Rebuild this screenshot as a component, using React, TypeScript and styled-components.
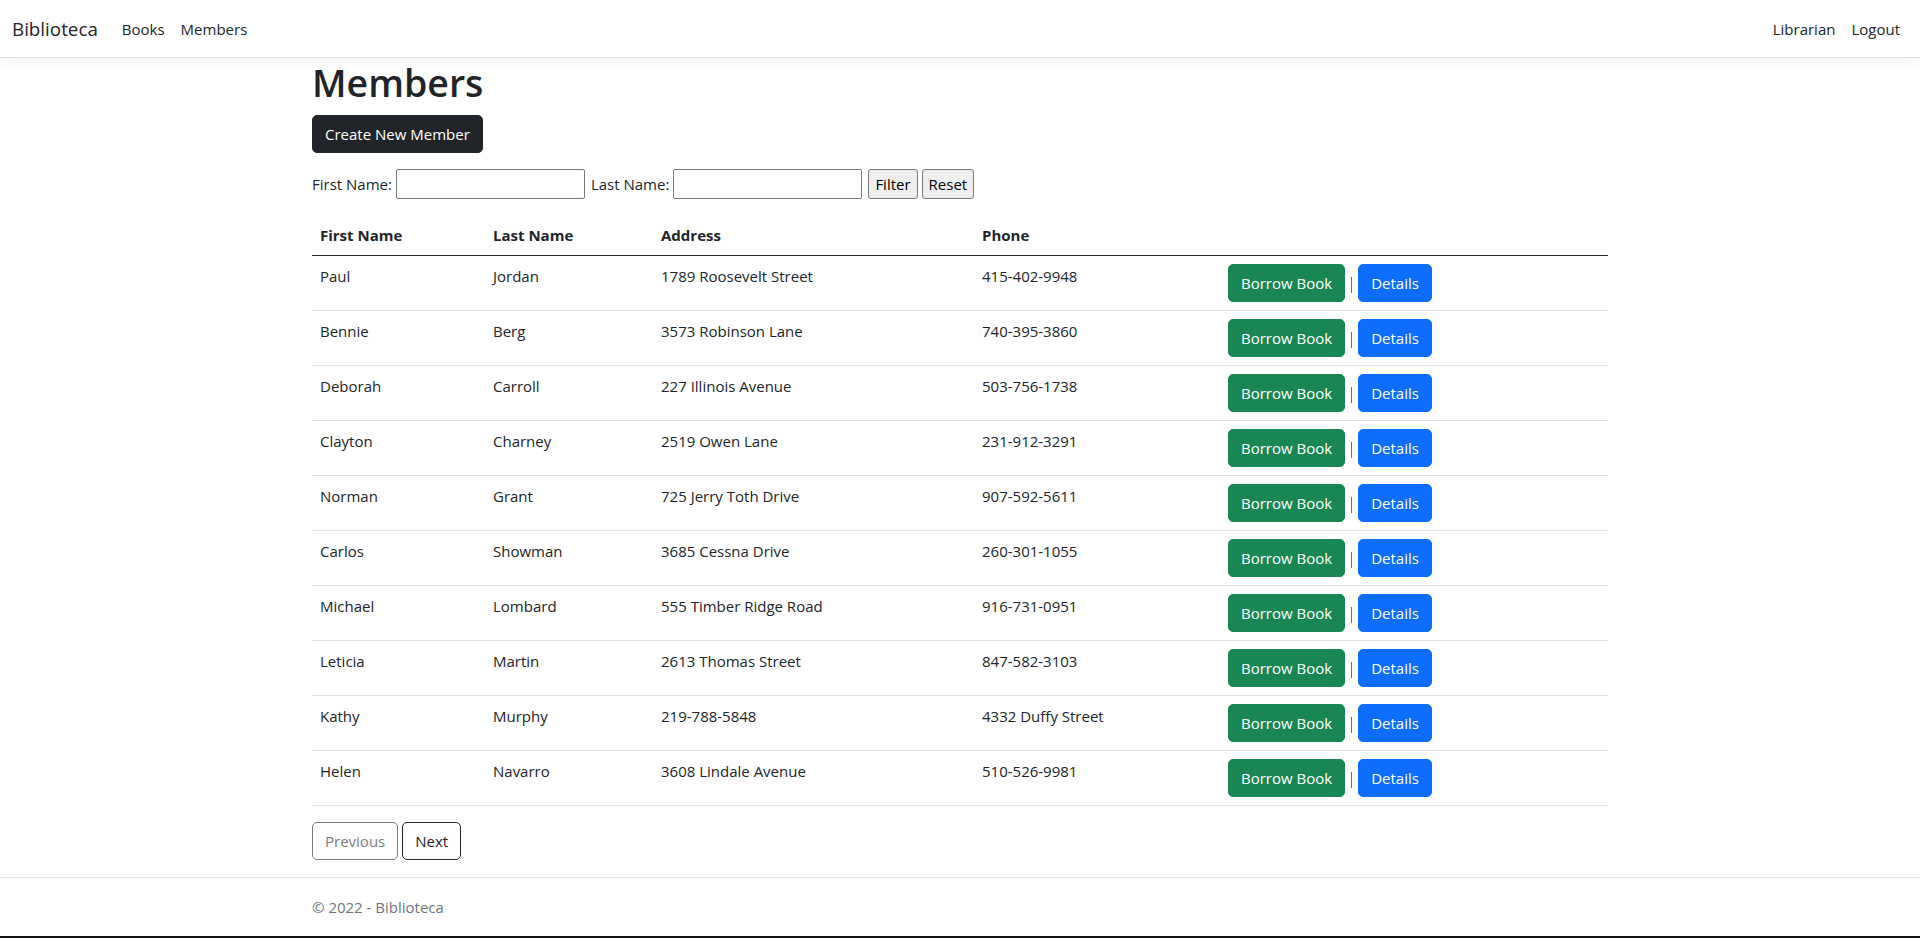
import React from "react";
import styled, { createGlobalStyle, css } from "styled-components";

const GlobalStyle = createGlobalStyle`
  html, body {
    margin: 0;
    padding: 0;
  }
  body {
    font-family: "Open Sans", "Noto Sans", Arial, sans-serif;
    font-size: 15px;
    line-height: 24px;
    color: #212529;
    background: #fff;
  }
  * {
    box-sizing: border-box;
  }
`;

const Page = styled.div`
  display: flex;
  flex-direction: column;
  min-height: 100vh;
`;

const NavBar = styled.header`
  display: flex;
  align-items: center;
  height: 58px;
  padding: 0 12px;
  background: #fff;
  border-bottom: 1px solid #dee2e6;
  box-shadow: 0 4px 12px rgba(0, 0, 0, 0.05);
`;

const Brand = styled.a`
  font-size: 18.8px;
  line-height: 30px;
  padding: 5px 0;
  margin-right: 16px;
  color: #212529;
  text-decoration: none;
`;

const NavList = styled.nav<{ $grow?: boolean }>`
  display: flex;
  flex: ${(p) => (p.$grow ? 1 : "none")};
`;

const NavLink = styled.a`
  padding: 8px;
  color: #212529;
  text-decoration: none;
  font-size: 15px;
  line-height: 24px;
`;

const Container = styled.div`
  width: 100%;
  max-width: 1296px;
  margin: 0 auto;
`;

const Main = styled.main`
  padding-bottom: 16px;
`;

const Title = styled.h1`
  font-size: 37.5px;
  font-weight: 600;
  line-height: 48px;
  margin: 1px 0 8px;
`;

const ButtonRow = styled.p`
  margin: 0 0 16px;
`;

type Variant = "dark" | "success" | "primary" | "outline";

const variants = {
  dark: css`
    background: #212529;
    border-color: #212529;
    color: #fff;
  `,
  success: css`
    background: #198754;
    border-color: #198754;
    color: #fff;
  `,
  primary: css`
    background: #0d6efd;
    border-color: #0d6efd;
    color: #fff;
  `,
  outline: css`
    background: #fff;
    border-color: #212529;
    color: #212529;
  `,
};

const Btn = styled.button<{ $variant: Variant; $disabled?: boolean }>`
  display: inline-block;
  font-family: inherit;
  font-size: 15px;
  line-height: 24px;
  padding: 6px 12px;
  border: 1px solid transparent;
  border-radius: 5px;
  cursor: pointer;
  ${(p) => variants[p.$variant]}
  opacity: ${(p) => (p.$disabled ? 0.6 : 1)};
`;

const FilterForm = styled.form`
  display: flex;
  align-items: center;
  gap: 4px;
  height: 30px;
  margin-bottom: 16px;
`;

const Label = styled.label`
  font-size: 15px;
`;

const TextInput = styled.input`
  width: 189px;
  height: 30px;
  padding: 1px 2px;
  border: 1px solid #767676;
  border-radius: 2px;
  font-family: inherit;
  font-size: 15px;
  margin-right: 2px;
`;

const PlainButton = styled.button`
  height: 30px;
  padding: 0 6px;
  background: #efefef;
  border: 1px solid #767676;
  border-radius: 3px;
  font-family: inherit;
  font-size: 15px;
  color: #000;
`;

const Table = styled.table`
  width: 100%;
  border-collapse: collapse;
  table-layout: fixed;
  margin-bottom: 16px;
`;

const Th = styled.th`
  text-align: left;
  font-weight: 700;
  padding: 8px;
  line-height: 24px;
  border-bottom: 1px solid #212529;
`;

const Td = styled.td`
  padding: 8px;
  vertical-align: top;
  line-height: 24px;
  border-bottom: 1px solid #dee2e6;
`;

const Actions = styled.div`
  display: flex;
  align-items: center;
  gap: 3px;
`;

const Bar = styled.span`
  display: block;
  width: 7px;
  height: 16px;
  text-align: center;
  &::before {
    content: "";
    display: inline-block;
    width: 1.5px;
    height: 16px;
    background: #9a6434;
  }
`;

const Pager = styled.div`
  display: flex;
  gap: 4px;
`;

const Footer = styled.footer`
  margin-top: auto;
  border-top: 1px solid #dee2e6;
  border-bottom: 2px solid #151515;
  line-height: 58px;
  color: #6c757d;
  font-size: 15px;
  white-space: nowrap;
`;

const members = [
  { first: "Paul", last: "Jordan", address: "1789 Roosevelt Street", phone: "415-402-9948" },
  { first: "Bennie", last: "Berg", address: "3573 Robinson Lane", phone: "740-395-3860" },
  { first: "Deborah", last: "Carroll", address: "227 Illinois Avenue", phone: "503-756-1738" },
  { first: "Clayton", last: "Charney", address: "2519 Owen Lane", phone: "231-912-3291" },
  { first: "Norman", last: "Grant", address: "725 Jerry Toth Drive", phone: "907-592-5611" },
  { first: "Carlos", last: "Showman", address: "3685 Cessna Drive", phone: "260-301-1055" },
  { first: "Michael", last: "Lombard", address: "555 Timber Ridge Road", phone: "916-731-0951" },
  { first: "Leticia", last: "Martin", address: "2613 Thomas Street", phone: "847-582-3103" },
  { first: "Kathy", last: "Murphy", address: "219-788-5848", phone: "4332 Duffy Street" },
  { first: "Helen", last: "Navarro", address: "3608 Lindale Avenue", phone: "510-526-9981" },
];

const columnWidths = [173, 168, 321, 246, 388];

const App: React.FC = () => {
  return (
    <Page>
      <GlobalStyle />
      <NavBar>
        <Brand href="#">Biblioteca</Brand>
        <NavList $grow>
          <NavLink href="#">Books</NavLink>
          <NavLink href="#">Members</NavLink>
        </NavList>
        <NavList>
          <NavLink href="#">Librarian</NavLink>
          <NavLink href="#">Logout</NavLink>
        </NavList>
      </NavBar>

      <Container>
        <Main>
          <Title>Members</Title>
          <ButtonRow>
            <Btn $variant="dark">Create New Member</Btn>
          </ButtonRow>

          {/* filter form */}
          <FilterForm onSubmit={(e) => e.preventDefault()}>
            <Label>First Name:</Label>
            <TextInput type="text" />
            <Label>Last Name:</Label>
            <TextInput type="text" />
            <PlainButton type="submit">Filter</PlainButton>
            <PlainButton type="button">Reset</PlainButton>
          </FilterForm>

          <Table>
            <colgroup>
              {columnWidths.map((w, i) => (
                <col key={i} style={{ width: w }} />
              ))}
            </colgroup>
            <thead>
              <tr>
                <Th>First Name</Th>
                <Th>Last Name</Th>
                <Th>Address</Th>
                <Th>Phone</Th>
                <Th></Th>
              </tr>
            </thead>
            <tbody>
              {members.map((m, index) => (
                <tr key={index}>
                  <Td>{m.first}</Td>
                  <Td>{m.last}</Td>
                  <Td>{m.address}</Td>
                  <Td>{m.phone}</Td>
                  <Td>
                    <Actions>
                      <Btn $variant="success">Borrow Book</Btn>
                      <Bar aria-hidden="true" />
                      <Btn $variant="primary">Details</Btn>
                    </Actions>
                  </Td>
                </tr>
              ))}
            </tbody>
          </Table>

          <Pager>
            <Btn $variant="outline" $disabled>
              Previous
            </Btn>
            <Btn $variant="outline">Next</Btn>
          </Pager>
        </Main>
      </Container>

      <Footer>
        <Container>© 2022 - Biblioteca</Container>
      </Footer>
    </Page>
  );
};

export default App;
